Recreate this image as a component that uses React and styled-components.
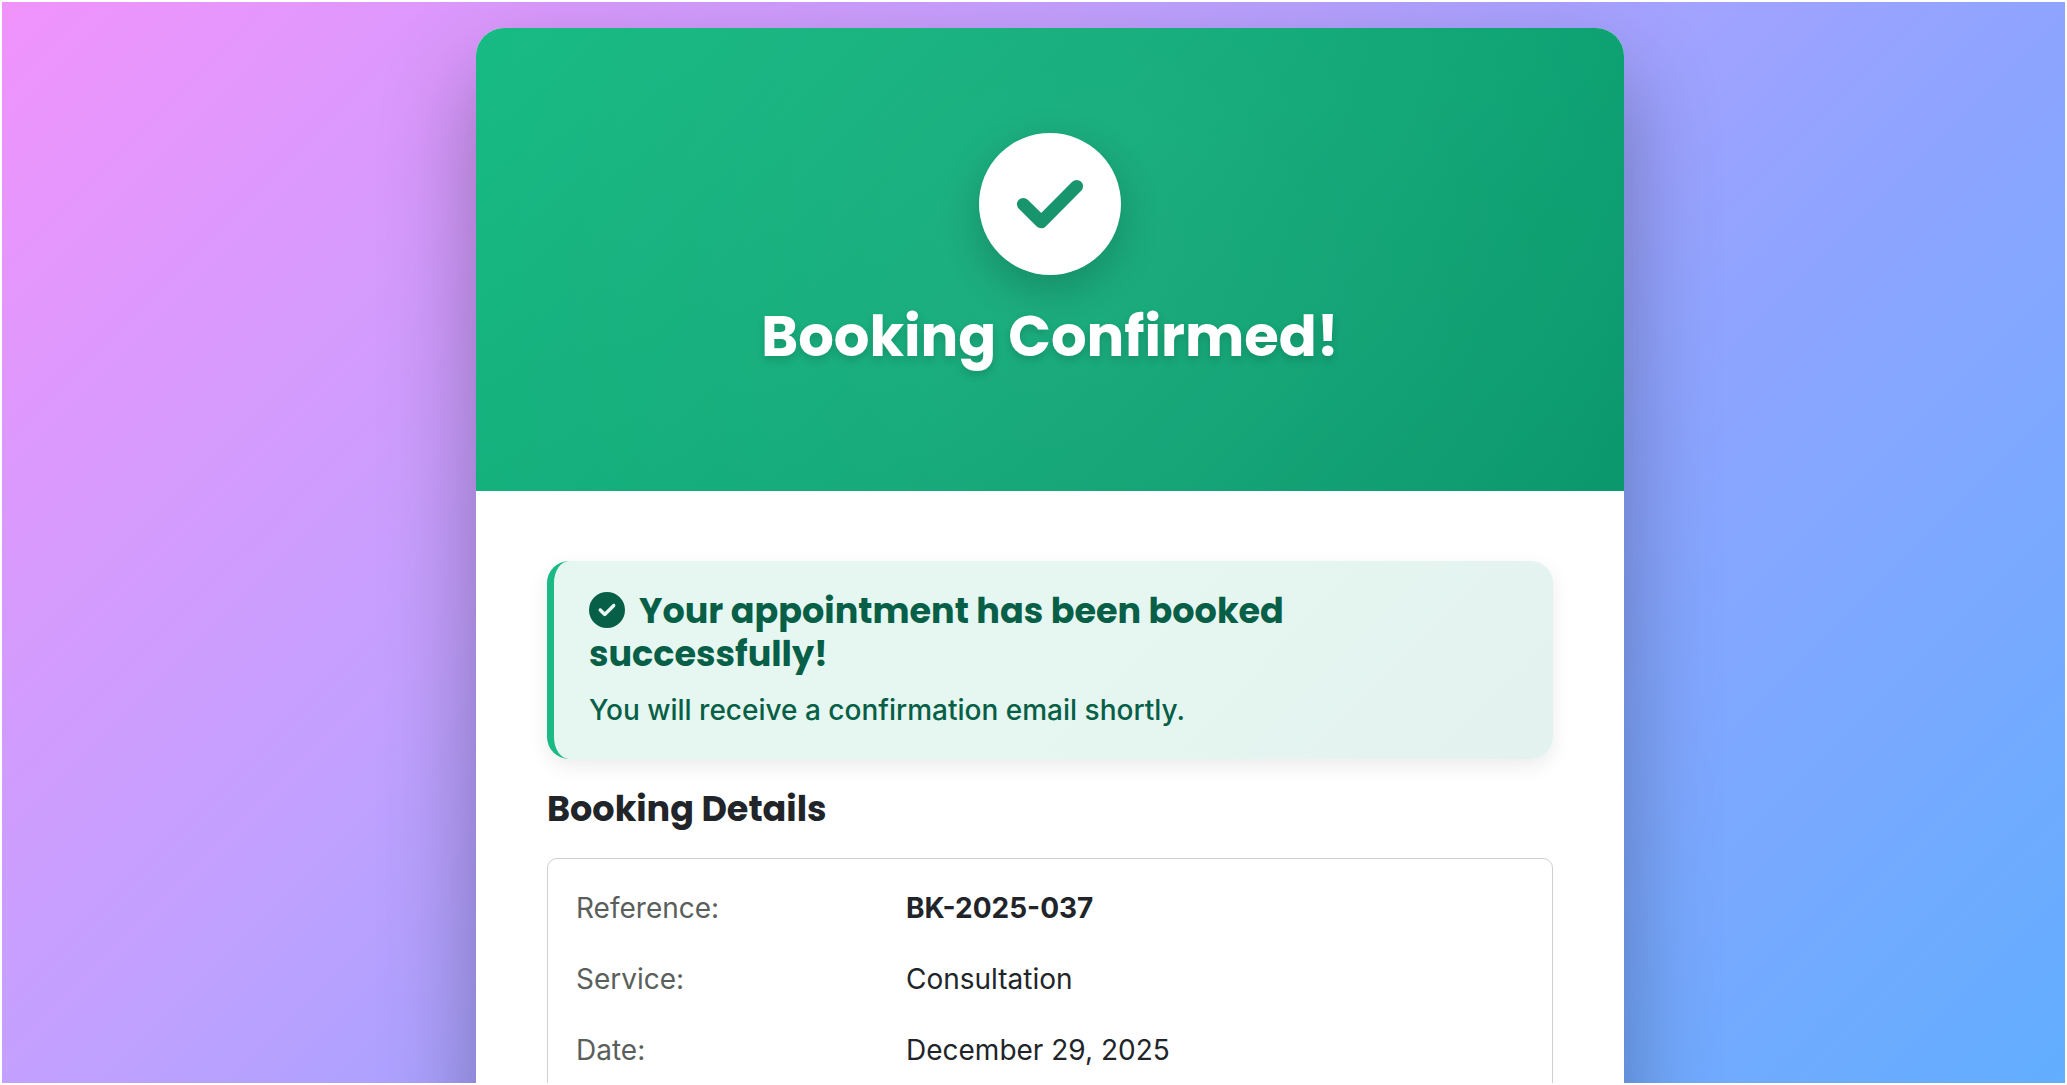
import React from 'react';
import styled, { createGlobalStyle } from 'styled-components';
import { FaCircleCheck } from 'react-icons/fa6';

const details = [
  { label: 'Reference:', value: 'BK-2025-037', strong: true },
  { label: 'Service:', value: 'Consultation' },
  { label: 'Date:', value: 'December 29, 2025' },
];

const App = () => {
  return (
    <>
      <GlobalStyle />
      <Page>
        <Card>
          <Header>
            <CheckCircle>
              <CheckMark viewBox="0 0 80 68" aria-hidden="true">
                <polyline points="13.3,34.3 31.2,51.9 66.7,16.3" />
              </CheckMark>
            </CheckCircle>
            <Title>Booking Confirmed!</Title>
          </Header>
          <Content>
            <Alert role="status">
              <AlertTitle>
                <AlertIcon aria-hidden="true" />
                Your appointment has been booked successfully!
              </AlertTitle>
              <AlertText>You will receive a confirmation email shortly.</AlertText>
            </Alert>
            <SectionTitle>Booking Details</SectionTitle>
            <DetailsBox>
              {details.map((item) => (
                <DetailRow key={item.label}>
                  <Label>{item.label}</Label>
                  <Value $strong={item.strong}>{item.value}</Value>
                </DetailRow>
              ))}
            </DetailsBox>
          </Content>
        </Card>
      </Page>
    </>
  );
};

const GlobalStyle = createGlobalStyle`
  * {
    box-sizing: border-box;
  }

  body {
    margin: 0;
    background: #ffffff;
    color: #212529;
    font-family: Inter, 'Liberation Sans', sans-serif;
    font-size: 28px;
    line-height: 42px;
  }
`;

const Page = styled.main`
  display: flex;
  justify-content: center;
  align-items: flex-start;
  height: 100vh;
  padding: 26px 0 0 33px;
  border: 2px solid #ffffff;
  overflow: hidden;
  background: linear-gradient(135deg, #f093fb 0%, #c4a0ff 34%, #8fa4ff 65%, #62aeff 100%);
`;

const Card = styled.article`
  display: flex;
  flex-direction: column;
  flex: 1;
  max-width: 1148px;
  min-height: 120vh;
  border-radius: 28px;
  overflow: hidden;
  background: #ffffff;
  box-shadow: 0 44px 96px rgba(0, 0, 0, 0.3);
`;

const Header = styled.header`
  display: flex;
  flex-direction: column;
  align-items: center;
  gap: 28px;
  padding: 105px 72px 121px;
  background:
    radial-gradient(circle, rgba(255, 255, 255, 0.07) 0%, rgba(255, 255, 255, 0) 140%),
    linear-gradient(135deg, #13b981 0%, #059669 100%);
`;

const CheckCircle = styled.div`
  display: flex;
  align-items: center;
  justify-content: center;
  width: 142px;
  height: 142px;
  border-radius: 50%;
  background: #ffffff;
  box-shadow: 0 14px 42px rgba(0, 0, 0, 0.2);
`;

const CheckMark = styled.svg`
  width: 80px;
  height: 68px;
  fill: none;
  stroke: #19956e;
  stroke-width: 12.7;
  stroke-linecap: round;
  stroke-linejoin: round;
`;

const Title = styled.h1`
  margin: 0;
  color: #ffffff;
  font-family: Poppins, Inter, sans-serif;
  font-size: 56px;
  font-weight: 700;
  line-height: 67px;
  text-shadow: 0 4px 8px rgba(0, 0, 0, 0.15);
`;

const Content = styled.div`
  display: flex;
  flex-direction: column;
  flex: 1;
  padding: 70px 71px;
`;

const Alert = styled.div`
  margin-bottom: 28px;
  padding: 28px 35px;
  border-left: 7px solid #1ab985;
  border-radius: 22px;
  background: linear-gradient(135deg, #e6f7f1 0%, #e6f6f0 50%, #e3f2ef 100%);
  color: #065f46;
  box-shadow: 0 7px 20px rgba(0, 0, 0, 0.08);
`;

const AlertTitle = styled.h2`
  margin: 0 0 14px;
  font-family: Poppins, Inter, sans-serif;
  font-size: 35px;
  font-weight: 700;
  line-height: 43px;
`;

const AlertIcon = styled(FaCircleCheck)`
  width: 36px;
  height: 36px;
  margin-right: 14px;
  vertical-align: -5px;
`;

const AlertText = styled.p`
  margin: 0;
  font-weight: 500;
`;

const SectionTitle = styled.h2`
  margin: 0 0 28px;
  font-family: Poppins, Inter, sans-serif;
  font-size: 35px;
  font-weight: 700;
  line-height: 43px;
`;

const DetailsBox = styled.dl`
  display: flex;
  flex-direction: column;
  flex: 1;
  gap: 29px;
  margin: 0;
  padding: 28px;
  border: 1px solid #cfcfcf;
  border-radius: 10px;
`;

const DetailRow = styled.div`
  display: grid;
  grid-template-columns: 1fr 2fr;
  column-gap: 21px;
`;

const Label = styled.dt`
  color: #5a5f5c;
`;

const Value = styled.dd`
  margin: 0;
  font-weight: ${(props) => (props.$strong ? 700 : 400)};
`;

export default App;
